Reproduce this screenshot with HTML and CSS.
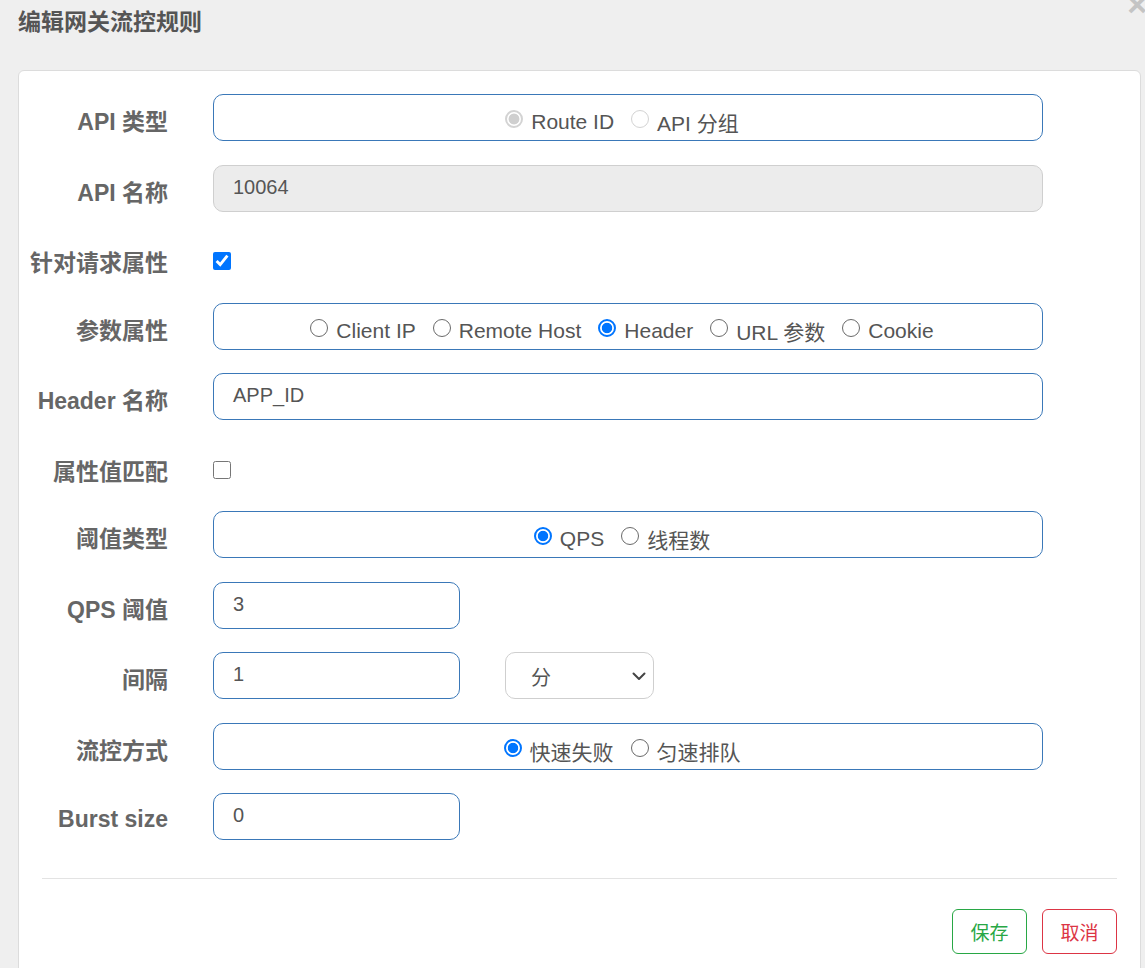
FILE: index.html
```html
<!DOCTYPE html>
<html lang="zh-CN">
<head>
<meta charset="utf-8">
<title>编辑网关流控规则</title>
<link rel="stylesheet" href="styles.css">
</head>
<body>
<div class="dialog">
  <div class="header">
    <h1 class="title">编辑网关流控规则</h1>
    <span class="close">×</span>
  </div>
  <div class="panel">
    <form class="form">
      <div class="row">
        <label class="label">API 类型</label>
        <div class="control box radios">
          <label class="opt"><input type="radio" name="apitype" checked disabled>Route ID</label>
          <label class="opt"><input type="radio" name="apitype" disabled>API 分组</label>
        </div>
      </div>
      <div class="row">
        <label class="label">API 名称</label>
        <div class="control box disabled">10064</div>
      </div>
      <div class="row check-row">
        <label class="label">针对请求属性</label>
        <div class="control check"><input type="checkbox" checked></div>
      </div>
      <div class="row">
        <label class="label">参数属性</label>
        <div class="control box radios">
          <label class="opt"><input type="radio" name="param">Client IP</label>
          <label class="opt"><input type="radio" name="param">Remote Host</label>
          <label class="opt"><input type="radio" name="param" checked>Header</label>
          <label class="opt"><input type="radio" name="param">URL 参数</label>
          <label class="opt"><input type="radio" name="param">Cookie</label>
        </div>
      </div>
      <div class="row">
        <label class="label">Header 名称</label>
        <div class="control box text">APP_ID</div>
      </div>
      <div class="row check-row">
        <label class="label">属性值匹配</label>
        <div class="control check"><input type="checkbox"></div>
      </div>
      <div class="row">
        <label class="label">阈值类型</label>
        <div class="control box radios">
          <label class="opt"><input type="radio" name="grade" checked>QPS</label>
          <label class="opt"><input type="radio" name="grade">线程数</label>
        </div>
      </div>
      <div class="row">
        <label class="label">QPS 阈值</label>
        <div class="control"><div class="box text small">3</div></div>
      </div>
      <div class="row">
        <label class="label">间隔</label>
        <div class="control inline">
          <div class="box text small">1</div>
          <div class="select"><span>分</span>
            <svg class="chev" width="14" height="9" viewBox="0 0 14 9"><path d="M1.5 1.5 L7 7 L12.5 1.5" fill="none" stroke="#444" stroke-width="2" stroke-linecap="round" stroke-linejoin="round"/></svg>
          </div>
        </div>
      </div>
      <div class="row">
        <label class="label">流控方式</label>
        <div class="control box radios">
          <label class="opt"><input type="radio" name="behavior" checked>快速失败</label>
          <label class="opt"><input type="radio" name="behavior">匀速排队</label>
        </div>
      </div>
      <div class="row">
        <label class="label">Burst size</label>
        <div class="control"><div class="box text small">0</div></div>
      </div>
    </form>
    <div class="footer">
      <button class="btn btn-save" type="button">保存</button>
      <button class="btn btn-cancel" type="button">取消</button>
    </div>
  </div>
</div>
</body>
</html>
```
FILE: styles.css
```css
* { box-sizing: border-box; }
html, body {
  margin: 0;
  padding: 0;
  background: #efefef;
  font-family: "Liberation Sans", "Noto Sans CJK SC", sans-serif;
  overflow: hidden;
}
.dialog {
  width: 1145px;
  height: 968px;
}
.header {
  display: flex;
  justify-content: space-between;
  align-items: flex-start;
  height: 70px;
  padding-left: 18px;
}
.title {
  margin: 6px 0 0 0;
  font-size: 23px;
  line-height: 32px;
  font-weight: bold;
  color: #555;
}
.close {
  margin-top: -13px;
  margin-right: -2px;
  font-size: 34px;
  line-height: 34px;
  font-weight: bold;
  color: #c4c4c4;
}
.panel {
  margin: 0 4px 0 18px;
  background: #fff;
  border: 1px solid #dcdcdc;
  border-radius: 6px;
  height: 920px;
  padding-top: 23px;
}
.form {
  display: flex;
  flex-direction: column;
  gap: 23.5px;
}
.row {
  display: grid;
  grid-template-columns: 149px 830px;
  column-gap: 45px;
  height: 47px;
}
.row.check-row {
  height: 44px;
}
.label {
  display: flex;
  justify-content: flex-end;
  align-items: center;
  padding-top: 5px;
  font-size: 23px;
  font-weight: bold;
  color: #666;
  white-space: nowrap;
}
.check-row .label {
  padding-top: 8px;
}
.control {
  display: flex;
  align-items: center;
}
.box {
  height: 47px;
  border: 1px solid #3a78b8;
  border-radius: 10px;
  background: #fff;
  font-size: 20px;
  color: #555;
}
.box.text, .box.disabled {
  padding-left: 19px;
  padding-bottom: 2px;
}
.box.disabled {
  background: #ececec;
  border-color: #cfcfcf;
}
.box.small {
  width: 247px;
  display: flex;
  align-items: center;
}
.radios {
  justify-content: center;
  padding-top: 9px;
  gap: 17px;
  font-size: 21px;
  padding-right: 12px;
}
.opt {
  display: flex;
  align-items: center;
  gap: 8px;
  white-space: nowrap;
}
.opt input {
  appearance: none;
  -webkit-appearance: none;
  width: 18px;
  height: 18px;
  margin: 0 0 6px 0;
  border: 1.5px solid #6a6a6a;
  border-radius: 50%;
  background: #fff;
  flex: none;
}
.opt input:checked {
  border: 2px solid #0075ff;
  background: radial-gradient(circle, #0075ff 0, #0075ff 4.8px, #fff 5.6px);
}
.opt input:disabled {
  border-color: #d3d3d3;
}
.opt input:disabled:checked {
  border: 2px solid #d3d3d3;
  background: radial-gradient(circle, #cfcfcf 0, #cfcfcf 5px, #fff 5.8px);
}
.check {
  padding-top: 8px;
}
.check input {
  width: 18px;
  height: 18px;
  margin: 0;
}
.inline {
  gap: 45px;
}
.select {
  width: 149px;
  height: 47px;
  border: 1px solid #cfcfcf;
  border-radius: 10px;
  background: #fff;
  display: flex;
  align-items: center;
  justify-content: space-between;
  padding: 2px 7px 0 25px;
  font-size: 20px;
  color: #555;
}
.footer {
  margin: 38px 23px 0 23px;
  border-top: 1px solid #e3e3e3;
  padding-top: 30px;
  display: flex;
  justify-content: flex-end;
  gap: 15px;
}
.btn {
  width: 75px;
  height: 45px;
  border-radius: 6px;
  background: #fff;
  font-family: "Liberation Sans", "Noto Sans CJK SC", sans-serif;
  font-size: 19px;
  padding: 0;
}
.btn-save {
  border: 1px solid #28a745;
  color: #28a745;
}
.btn-cancel {
  border: 1px solid #dc3545;
  color: #dc3545;
}
```
